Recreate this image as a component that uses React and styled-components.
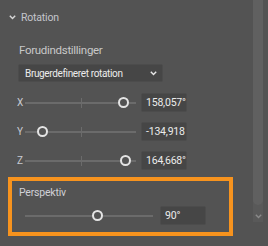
import React from "react";
import styled, { createGlobalStyle } from "styled-components";

const Global = createGlobalStyle`
  html, body {
    margin: 0;
    padding: 0;
    background: #535353;
    overflow: hidden;
  }
  body {
    font-family: Roboto, "Liberation Sans", sans-serif;
    color: #d6d6d6;
    letter-spacing: -0.2px;
  }
`;

const Panel = styled.div`
  display: flex;
  width: 268px;
  height: 246px;
`;

const Content = styled.div`
  flex: 1;
  display: flex;
  flex-direction: column;
  padding-top: 10px;
`;

const Header = styled.div`
  display: flex;
  align-items: center;
  gap: 5px;
  height: 14px;
  padding-left: 9px;
  font-size: 10.5px;
  color: #c4c6cc;
`;

const Title = styled.div`
  margin: 19px 0 0 19px;
  font-size: 11.5px;
  line-height: 14px;
  letter-spacing: -0.3px;
  color: #c8c8c8;
`;

const Select = styled.div`
  margin: 7px 0 0 18px;
  width: 145px;
  height: 18px;
  box-sizing: border-box;
  display: flex;
  align-items: center;
  justify-content: space-between;
  padding: 0 5px 0 6px;
  background: #464646;
  border: 1px solid #4c4c4c;
  border-radius: 2px;
  font-size: 10px;
  letter-spacing: -0.35px;
  color: #ececec;
  white-space: nowrap;
`;

const Rows = styled.div`
  display: flex;
  flex-direction: column;
  gap: 10px;
  margin-top: 11px;
`;

const Row = styled.div`
  display: flex;
  align-items: center;
  height: 19px;
  padding-left: 17px;
`;

const Axis = styled.span`
  width: 8px;
  font-size: 10px;
  color: #c8cad2;
`;

const Track = styled.div`
  position: relative;
  width: ${p => p.$w}px;
  height: 2px;
  background: #6b6b6b;
`;

const Tick = styled.div`
  position: absolute;
  left: 50%;
  top: -4px;
  width: 1px;
  height: 10px;
  background: #6b6b6b;
`;

const Thumb = styled.div`
  position: absolute;
  top: 50%;
  width: 7px;
  height: 7px;
  margin: -5.5px 0 0 -5.5px;
  border: 2px solid #e4e4e4;
  border-radius: 50%;
  background: #535353;
`;

const Value = styled.div`
  margin-left: ${p => p.$gap}px;
  width: 46px;
  height: 19px;
  box-sizing: border-box;
  display: flex;
  align-items: center;
  padding-left: 4px;
  background: #464646;
  border: 1px solid #4c4c4c;
  border-radius: 2px;
  font-size: 10.5px;
  color: #ececec;
`;

const Highlight = styled.div`
  margin: 7px 0 0 8px;
  width: 225px;
  height: 59px;
  box-sizing: border-box;
  border: 4px solid #f7931e;
  display: flex;
  flex-direction: column;
  padding: 5px 0 0 7px;
`;

const SubLabel = styled.div`
  font-size: 10.5px;
  line-height: 13px;
  color: #d0d0d6;
`;

const PerspRow = styled.div`
  display: flex;
  align-items: center;
  height: 17px;
  margin-top: 8px;
  padding-left: 6px;
`;

const Scroll = styled.div`
  width: 10px;
  margin-right: 5px;
  height: 222px;
  background: #595959;
  display: flex;
  flex-direction: column;
  align-items: center;
`;

const ScrollThumb = styled.div`
  width: 10px;
  height: 205px;
  background: #606060;
  border-radius: 0 0 5px 5px;
`;

const ScrollArrow = styled.div`
  margin-top: 9px;
  display: flex;
`;

const Chevron = ({ color = "#e8e8e8", w = 7, h = 4 }) => (
  <svg width={w} height={h + 1} viewBox="0 0 7 5">
    <path d="M0.8 0.8 L3.5 3.6 L6.2 0.8" fill="none" stroke={color} strokeWidth="1.4" />
  </svg>
);

const Slider = ({ axis, pos, value, width = 111, gap = 5, tick = true }) => (
  <>
    <Axis>{axis}</Axis>
    <Track $w={width}>
      {tick && <Tick />}
      <Thumb style={{ left: `${pos}px` }} />
    </Track>
    <Value $gap={gap}>{value}</Value>
  </>
);

export default function App() {
  return (
    <>
      <Global />
      <Panel>
        <Content>
          <Header>
            <Chevron color="#d8d8d8" />
            <span>Rotation</span>
          </Header>
          <Title>Forudindstillinger</Title>
          <Select>
            <span>Brugerdefineret rotation</span>
            <Chevron />
          </Select>
          <Rows>
            <Row><Slider axis="X" pos={98} value="158,057°" /></Row>
            <Row><Slider axis="Y" pos={17} value="-134,918" /></Row>
            <Row><Slider axis="Z" pos={100} value="164,668°" /></Row>
          </Rows>
          <Highlight>
            <SubLabel>Perspektiv</SubLabel>
            <PerspRow>
              <Track $w={128}>
                <Thumb style={{ left: "72px" }} />
              </Track>
              <Value $gap={7}>90°</Value>
            </PerspRow>
          </Highlight>
        </Content>
        <Scroll>
          <ScrollThumb />
          <ScrollArrow>
            <Chevron color="#8a8a8a" />
          </ScrollArrow>
        </Scroll>
      </Panel>
    </>
  );
}
